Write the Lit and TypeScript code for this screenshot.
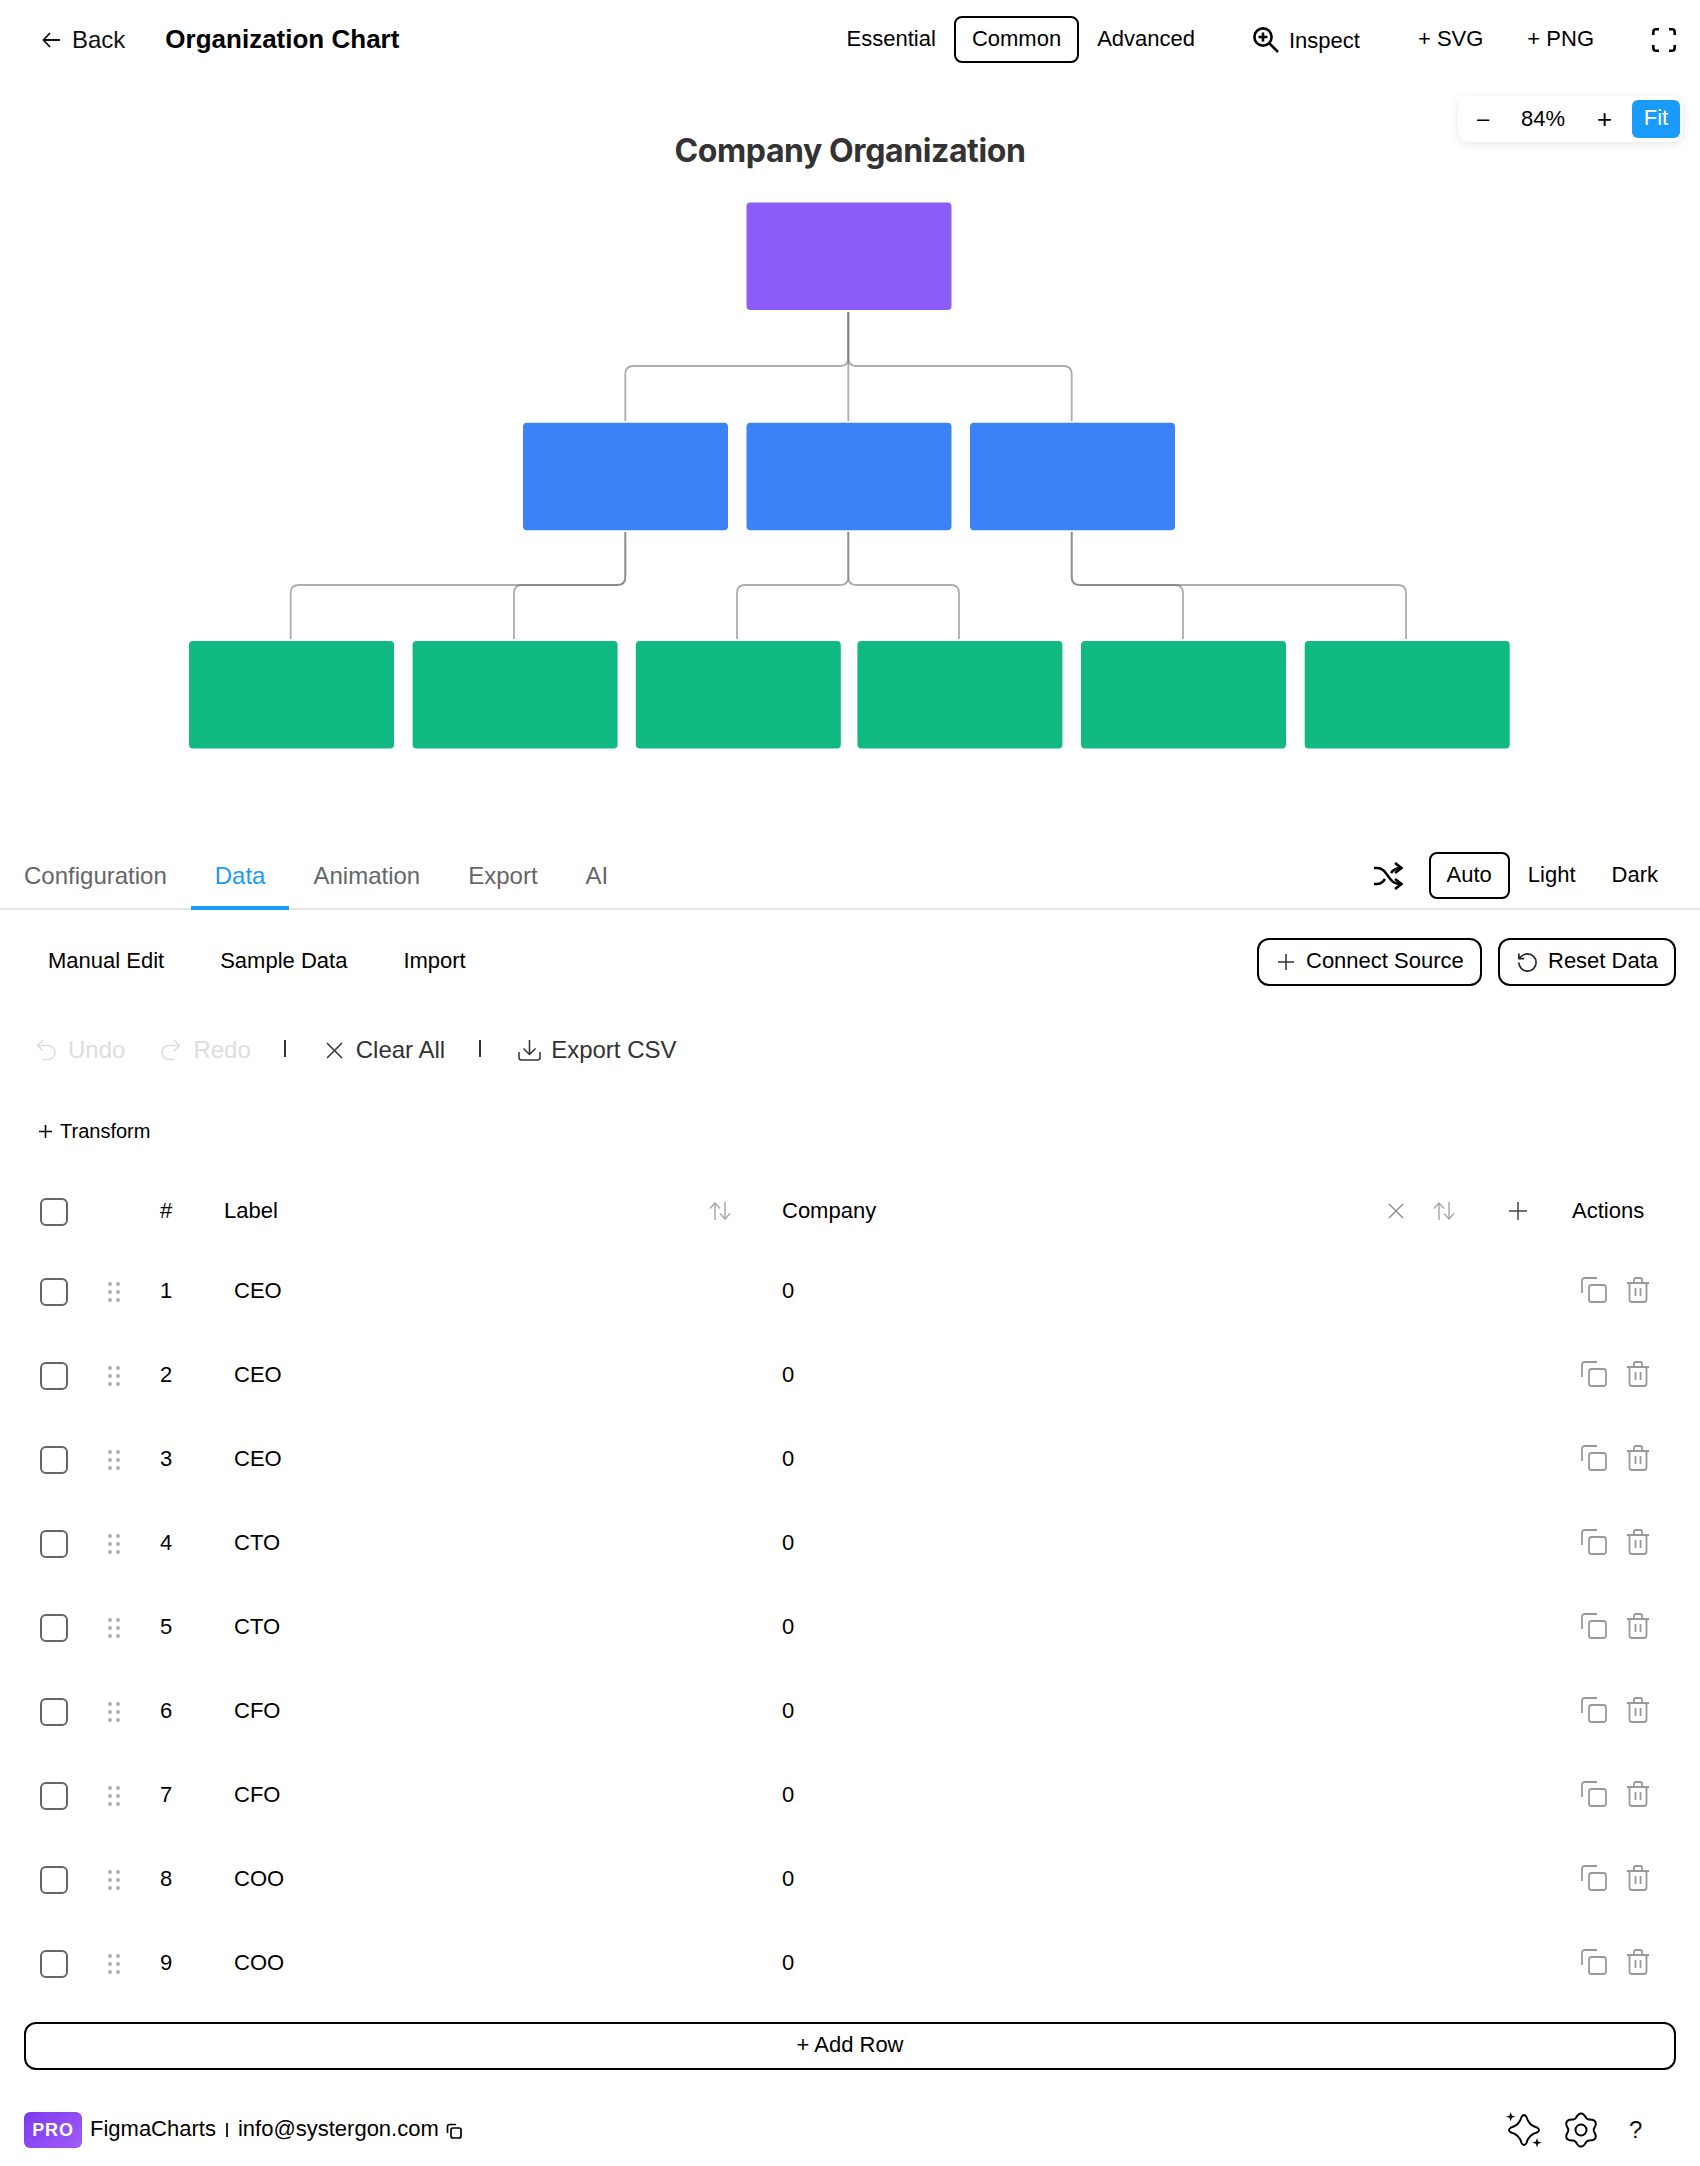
import { LitElement, html, css, svg } from "lit";
import { customElement } from "lit/decorators.js";

const W = 205, H = 107.5;
const purple = [746.5];
const blues = [523, 746.5, 970];
const greens = [189, 412.6, 635.8, 857.4, 1081, 1304.7];

function link(x0: number, y0: number, x1: number, ym: number, y1: number) {
  if (Math.abs(x0 - x1) < 1) return `M${x0} ${y0}V${y1}`;
  const r = 8, s = x1 > x0 ? 1 : -1;
  return `M${x0} ${y0}V${ym - r}Q${x0} ${ym} ${x0 + s * r} ${ym}H${x1 - s * r}Q${x1} ${ym} ${x1} ${ym + r}V${y1}`;
}
const links = [
  ...[625.3, 848.3, 1071.7].map((x) => link(848.3, 312, x, 366, 421)),
  ...[290.7, 514].map((x) => link(625.3, 532, x, 585, 639)),
  ...[737, 959].map((x) => link(848.3, 532, x, 585, 639)),
  ...[1183, 1406].map((x) => link(1071.7, 532, x, 585, 639)),
];

function gearPath() {
  const pts: string[] = [];
  for (let i = 0; i < 180; i++) {
    const t = (i / 180) * Math.PI * 2;
    const r = 14.6 + 1.9 * Math.cos(6 * t);
    pts.push(`${(18 + r * Math.sin(t)).toFixed(2)} ${(18 - r * Math.cos(t)).toFixed(2)}`);
  }
  return "M" + pts.join("L") + "Z";
}

const ic = {
  back: html`<svg class="i-back" viewBox="0 0 18 16"><path d="M18 8H2M8 1L1.5 8L8 15"/></svg>`,
  inspect: html`<svg class="i-inspect" viewBox="0 0 26 26"><circle cx="10" cy="10" r="8.6"/><path d="M10 5.5V14.5M5.5 10H14.5M16.5 16.5L25 25"/></svg>`,
  full: html`<svg class="i-full" viewBox="0 0 24 24"><path d="M1.3 7V4Q1.3 1.3 4 1.3H7M17 1.3H20Q22.7 1.3 22.7 4V7M22.7 17V20Q22.7 22.7 20 22.7H17M7 22.7H4Q1.3 22.7 1.3 20V17"/></svg>`,
  shuffle: html`<svg class="i-shuffle" viewBox="0 0 30 28"><path d="M1 6H4C10 6 12 10 15 14S20 22 28 22M1 22H4C8 22 10 20 12 17M18 11C20 8 23 6 28 6M22 1L28.5 6L22 11M22 17L28.5 22L22 27"/></svg>`,
  plus: html`<svg class="i-plus" viewBox="0 0 16 16"><path d="M8 0V16M0 8H16"/></svg>`,
  reset: html`<svg class="i-reset" viewBox="0 0 24 24"><path d="M3 12a9 9 0 1 0 9-9 9.75 9.75 0 0 0-6.74 2.74L3 8M3 2.500v5.500h5.500"/></svg>`,
  undo: html`<svg class="i-undo" viewBox="0 0 20 24"><path d="M7 2L1.500 7.500L7 13M1.500 7.500H12a7 7 0 0 1 0 14H7"/></svg>`,
  redo: html`<svg class="i-undo" viewBox="0 0 20 24"><path d="M13 2L18.500 7.500L13 13M18.500 7.500H8a7 7 0 0 0 0 14H13"/></svg>`,
  x: html`<svg class="i-x" viewBox="0 0 17 17"><path d="M1 1L16 16M16 1L1 16"/></svg>`,
  download: html`<svg class="i-download" viewBox="0 0 23 22"><path d="M11.500 1V15M5.500 9.500L11.500 15.500L17.500 9.500M1 13V18.500Q1 21 3.500 21H19.500Q22 21 22 18.500V13"/></svg>`,
  sort: html`<svg class="i-sort" viewBox="0 0 22 18"><path d="M6 18V1M1 6.500L6 1L11 6.500M16 0V17M11 11.500L16 17L21 11.500"/></svg>`,
  hx: html`<svg class="i-hx" viewBox="0 0 16 16"><path d="M1 1L15 15M15 1L1 15"/></svg>`,
  hplus: html`<svg class="i-hplus" viewBox="0 0 18 18"><path d="M9 0V18M0 9H18"/></svg>`,
  copy: html`<svg class="i-copy" viewBox="0 0 26 26"><rect x="8" y="8" width="17" height="17" rx="2.500"/><path d="M1 16V4Q1 1 4 1H16"/></svg>`,
  trash: html`<svg class="i-trash" viewBox="0 0 22 26"><path d="M0 6H22M7 6V3Q7 1 9 1H13Q15 1 15 3V6M2.500 6V22.500Q2.500 25 5 25H17Q19.500 25 19.500 22.500V6M8.500 11V19M13.500 11V19"/></svg>`,
  drag: html`<svg class="i-drag" viewBox="0 0 12 20"><circle cx="2" cy="2" r="1.900"/><circle cx="10" cy="2" r="1.900"/><circle cx="2" cy="10" r="1.900"/><circle cx="10" cy="10" r="1.900"/><circle cx="2" cy="18" r="1.900"/><circle cx="10" cy="18" r="1.900"/></svg>`,
  mini: html`<svg class="i-mini" viewBox="0 0 16 16"><rect x="5" y="5" width="10" height="10" rx="2"/><path d="M1.500 10V3.500Q1.500 1.500 3.500 1.500H10"/></svg>`,
  spark: html`<svg class="i-spark" viewBox="0 0 36 36"><path d="M15.500 5Q18 1 20.500 5C22 11 25 14 31 15.500Q35 18 31 20.500C25 22 22 25 20.500 31Q18 35 15.500 31C14 25 11 22 5 20.500Q1 18 5 15.500C11 14 14 11 15.500 5Z"/><path class="fill" d="M4.700 0L5.800 3.600L9.400 4.700L5.800 5.800L4.700 9.400L3.600 5.800L0 4.700L3.600 3.600ZM31 26L32.100 29.600L35.700 30.700L32.100 31.800L31 35.400L29.900 31.800L26.300 30.700L29.900 29.600Z"/></svg>`,
  gear: html`<svg class="i-gear" viewBox="0 0 36 36"><path d="${gearPath()}"/><circle cx="18" cy="18" r="5.500"/></svg>`,
};

const rows: [number, string][] = [
  [1, "CEO"], [2, "CEO"], [3, "CEO"], [4, "CTO"], [5, "CTO"], [6, "CFO"], [7, "CFO"], [8, "COO"], [9, "COO"],
];

@customElement("app-root")
export class AppRoot extends LitElement {
  static styles = css`
    :host { display: block; width: 1700px; height: 2166px; overflow: hidden; background: #fff; color: #000;
      font-family: "Liberation Sans", Arial, sans-serif; font-size: 22px; }
    * { box-sizing: border-box; }
    svg { display: block; flex: none; fill: none; stroke: currentColor; }

    .header { height: 79px; display: flex; align-items: center; padding-right: 24px; }
    .back { display: flex; align-items: center; gap: 12px; margin-left: 42px; font-size: 24px; color: #111; }
    .i-back { width: 18px; height: 16px; stroke-width: 1.8; }
    .app-title { margin: 0 0 0 40px; font-size: 26px; font-weight: 700; }
    .spacer { flex: 1; }
    .seg { height: 47px; padding: 0 16px 2px; display: flex; align-items: center; border: 2px solid transparent; border-radius: 8px; }
    .seg.on { border-color: #000; }
    .inspect { display: flex; align-items: center; gap: 10px; margin-left: 40px; }
    .inspect span { position: relative; top: 1px; }
    .i-inspect { width: 26px; height: 26px; stroke-width: 2.6; }
    .svg-btn { margin-left: 58px; padding-bottom: 2px; }
    .png-btn { margin-left: 44px; padding-bottom: 2px; }
    .i-full { width: 24px; height: 24px; margin-left: 58px; stroke-width: 2.600; }

    .chart { position: relative; height: 761px; }
    .chart-title { margin: 0; padding-top: 50px; height: 93px; line-height: 44px; text-align: center; font-family: Inter, sans-serif;
      font-size: 32px; font-weight: 700; color: #333; letter-spacing: -0.4px; }
    .chart-svg { width: 1700px; height: 668px; }
    .lnk { stroke: #777; stroke-opacity: 0.6; stroke-width: 1.800; }
    .zoom { position: absolute; top: 17px; right: 17.500px; width: 224.500px; height: 46px; display: flex; align-items: center;
      background: #fff; border-radius: 10px; box-shadow: 0 2px 10px rgba(0,0,0,0.1); padding: 0 2.500px 0 0; }
    .zm { flex: none; text-align: center; }
    .zm-minus { width: 50px; }
    .zm-val { width: 70px; }
    .zm-plus { width: 53px; font-size: 26px; line-height: 30px; }
    .fit { width: 48px; height: 38px; line-height: 36px; margin-left: auto; text-align: center; color: #fff; background: #1a9bfc; border-radius: 6px; }

    .tabs { height: 70px; display: flex; align-items: flex-start; border-bottom: 2px solid #e5e5e5; padding-right: 24px; }
    .tab { height: 70px; padding: 0 24px; line-height: 72px; font-size: 24px; color: #666; border-bottom: 4px solid transparent; }
    .tab.on { color: #1a9bfc; border-bottom-color: #1a9bfc; }
    .tab-right { display: flex; align-items: center; margin: 12px 0 0 auto; }
    .i-shuffle { width: 30px; height: 28px; margin-right: 26px; stroke-width: 2.500; }

    .subnav { display: flex; align-items: center; height: 48px; margin-top: 28px; padding: 0 24px 0 48px; }
    .sub { margin-right: 56px; padding-bottom: 2px; }
    .btn { height: 48px; display: flex; align-items: center; border: 2px solid #000; border-radius: 12px; }
    .btn span { padding-bottom: 2px; }
    .btn-conn { margin-left: auto; width: 225px; padding-left: 19px; gap: 12px; }
    .btn-reset { margin-left: 16px; width: 178px; padding-left: 16px; gap: 9px; }
    .i-plus { width: 16px; height: 16px; stroke-width: 1.500; color: #333; }
    .i-reset { width: 23px; height: 23px; stroke-width: 1.700; color: #222; }

    .actions { display: flex; align-items: center; height: 48px; margin-top: 40px; padding-left: 36px; font-size: 24px; color: #333; }
    .act { display: flex; align-items: center; gap: 12px; }
    .act.off { color: #ddd; }
    .act.redo { margin-left: 36px; }
    .i-undo { width: 20px; height: 24px; stroke-width: 1.600; }
    .sep { width: 2px; height: 17px; background: #333; position: relative; top: -2px; }
    .sep-a { margin-left: 33px; }
    .sep-b { margin-left: 34px; }
    .act.clear { margin-left: 40px; gap: 13px; }
    .i-x { width: 17px; height: 17px; stroke-width: 1.500; }
    .act.csv { margin-left: 37px; gap: 10px; }
    .i-download { width: 23px; height: 22px; stroke-width: 1.500; }

    .transform { display: flex; align-items: center; gap: 8px; height: 32px; margin-top: 41px; padding-left: 39px; font-size: 20px; }
    .i-tplus { width: 13px; height: 13px; stroke-width: 1.600; }

    .grid { display: grid; grid-template-columns: 68px 52px 64px 558px 1fr 104px; align-items: center; margin-left: 40px; margin-right: 24px; }
    .thead { height: 80px; margin-top: 23px; }
    .thead .cb { margin-top: 4px; }
    .thead .cell { padding-top: 2px; }
    .trow { height: 84px; }
    .trow .cell { padding-bottom: 3px; }
    .cb { width: 28px; height: 28px; margin-top: 0; border: 2px solid #666; border-radius: 6px; }
    .i-drag { width: 12px; height: 20px; margin: 0; fill: #aaa; stroke: none; }
    .h-label, .h-company { display: flex; align-items: center; }
    .i-sort { width: 22px; height: 18px; stroke-width: 1.500; color: #aaa; }
    .h-label .i-sort { margin: 2px 51px 0 auto; }
    .i-hx { width: 16px; height: 16px; margin: 2px 0 0 auto; stroke-width: 1.300; color: #888; }
    .h-company .i-sort { margin: 2px 0 0 29px; }
    .i-hplus { width: 18px; height: 18px; margin: 2px 45px 0 54px; stroke-width: 1.500; color: #444; }
    .lab { padding-left: 10px; }
    .row-act { display: flex; align-items: center; gap: 20px; padding: 0 0 4px 9px; color: #999; }
    .i-copy { width: 26px; height: 26px; stroke-width: 1.800; }
    .i-trash { width: 22px; height: 26px; stroke-width: 1.800; }

    .add { display: flex; align-items: center; justify-content: center; height: 48px; margin: 16px 24px 0; padding-bottom: 2px; border: 2px solid #000; border-radius: 12px; }

    .footer { display: flex; align-items: center; height: 36px; margin-top: 42px; padding-left: 24px; }
    .footer span { padding-bottom: 2px; }
    .pro { width: 58px; height: 36px; display: flex; align-items: center; justify-content: center; border-radius: 6px;
      background: linear-gradient(135deg, #7c3aed, #a05cf6); color: #fff; font-size: 18px; font-weight: 700; letter-spacing: 0.8px; }
    .brand { margin-left: 8px; }
    .fsep { width: 2px; height: 14px; margin: 0 10px; background: #222; }
    .i-mini { width: 16px; height: 16px; margin: 2px 0 0 7px; stroke-width: 1.700; }
    .i-spark { width: 36px; height: 36px; margin-left: auto; stroke-width: 1.900; }
    .i-spark .fill { fill: #000; stroke: none; }
    .i-gear { width: 36px; height: 36px; margin-left: 21px; stroke-width: 2; }
    .help { width: 13px; margin: 0 58px 0 30px; font-size: 24px; line-height: 36px; color: #111; }
  `;

  render() {
    return html`
      <div class="header">
        <div class="back">${ic.back}<span>Back</span></div>
        <h1 class="app-title">Organization Chart</h1>
        <div class="spacer"></div>
        <div class="seg">Essential</div>
        <div class="seg on">Common</div>
        <div class="seg">Advanced</div>
        <div class="inspect">${ic.inspect}<span>Inspect</span></div>
        <div class="svg-btn">+ SVG</div>
        <div class="png-btn">+ PNG</div>
        ${ic.full}
      </div>

      <div class="chart">
        <h2 class="chart-title">Company Organization</h2>
        <svg class="chart-svg" viewBox="0 172 1700 668">
          ${links.map((d) => svg`<path class="lnk" d="${d}"/>`)}
          ${purple.map((x) => svg`<rect x="${x}" y="202.500" width="${W}" height="${H}" rx="4" fill="#8b5cf6" stroke="none"/>`)}
          ${blues.map((x) => svg`<rect x="${x}" y="422.700" width="${W}" height="${H}" rx="4" fill="#3b82f6" stroke="none"/>`)}
          ${greens.map((x) => svg`<rect x="${x}" y="641" width="${W}" height="${H}" rx="4" fill="#10b981" stroke="none"/>`)}
        </svg>
        <div class="zoom">
          <div class="zm zm-minus">–</div>
          <div class="zm zm-val">84%</div>
          <div class="zm zm-plus">+</div>
          <div class="fit">Fit</div>
        </div>
      </div>

      <div class="tabs">
        <div class="tab">Configuration</div>
        <div class="tab on">Data</div>
        <div class="tab">Animation</div>
        <div class="tab">Export</div>
        <div class="tab">AI</div>
        <div class="tab-right">
          ${ic.shuffle}
          <div class="seg on">Auto</div>
          <div class="seg">Light</div>
          <div class="seg">Dark</div>
        </div>
      </div>

      <div class="subnav">
        <div class="sub">Manual Edit</div>
        <div class="sub">Sample Data</div>
        <div class="sub">Import</div>
        <div class="btn btn-conn">${ic.plus}<span>Connect Source</span></div>
        <div class="btn btn-reset">${ic.reset}<span>Reset Data</span></div>
      </div>

      <div class="actions">
        <div class="act off">${ic.undo}<span>Undo</span></div>
        <div class="act off redo">${ic.redo}<span>Redo</span></div>
        <div class="sep sep-a"></div>
        <div class="act clear">${ic.x}<span>Clear All</span></div>
        <div class="sep sep-b"></div>
        <div class="act csv">${ic.download}<span>Export CSV</span></div>
      </div>

      <div class="transform">
        <svg class="i-tplus" viewBox="0 0 13 13"><path d="M6.500 0V13M0 6.500H13"/></svg>
        <span>Transform</span>
      </div>

      <div class="grid thead">
        <div class="cb"></div>
        <div></div>
        <div class="cell">#</div>
        <div class="h-label"><span class="cell">Label</span>${ic.sort}</div>
        <div class="h-company"><span class="cell">Company</span>${ic.hx}${ic.sort}${ic.hplus}</div>
        <div class="cell">Actions</div>
      </div>

      ${rows.map(
        ([n, label]) => html`
          <div class="grid trow">
            <div class="cb"></div>
            ${ic.drag}
            <div class="cell">${n}</div>
            <div class="cell lab">${label}</div>
            <div class="cell">0</div>
            <div class="row-act">${ic.copy}${ic.trash}</div>
          </div>
        `
      )}

      <div class="add">+ Add Row</div>

      <div class="footer">
        <div class="pro">PRO</div>
        <span class="brand">FigmaCharts</span>
        <div class="fsep"></div>
        <span>info@systergon.com</span>
        ${ic.mini}
        ${ic.spark}
        ${ic.gear}
        <div class="help">?</div>
      </div>
    `;
  }
}
